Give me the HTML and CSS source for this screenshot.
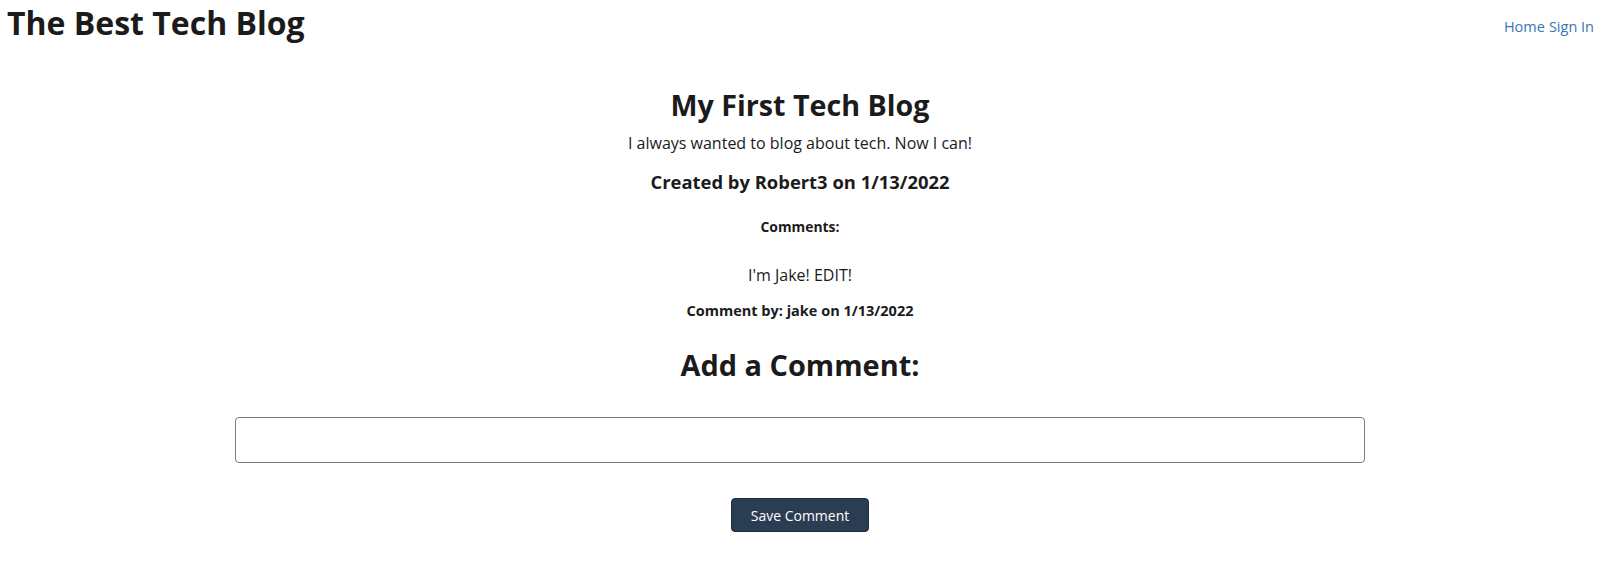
FILE: index.html
```html
<!DOCTYPE html>
<html lang="en">
<head>
<meta charset="utf-8">
<title>The Best Tech Blog</title>
<link rel="stylesheet" href="styles.css">
</head>
<body>
<header class="site-header">
  <h1 class="site-title">The Best Tech Blog</h1>
  <nav class="site-nav">
    <a href="#" class="nav-link">Home</a>
    <a href="#" class="nav-link">Sign In</a>
  </nav>
</header>
<main class="post">
  <h2 class="post-title">My First Tech Blog</h2>
  <p class="post-body">I always wanted to blog about tech. Now I can!</p>
  <h3 class="post-meta">Created by Robert3 on 1/13/2022</h3>
  <h5 class="comments-label">Comments:</h5>
  <div class="comment">
    <p class="comment-text">I'm Jake! EDIT!</p>
    <h4 class="comment-meta">Comment by: jake on 1/13/2022</h4>
  </div>
  <h2 class="add-title">Add a Comment:</h2>
  <form class="comment-form">
    <input class="comment-input" type="text">
    <button class="save-btn" type="button">Save Comment</button>
  </form>
</main>
</body>
</html>
```
FILE: styles.css
```css
* { box-sizing: border-box; }
body {
  margin: 0;
  font-family: "Open Sans", "Noto Sans", sans-serif;
  color: #1b1b1b;
  background: #fff;
}
.site-header {
  display: flex;
  justify-content: space-between;
  align-items: flex-start;
  padding: 0 6px 0 7px;
}
.site-title {
  margin: 0;
  font-size: 32px;
  line-height: 46px;
  font-weight: 700;
}
.site-nav {
  display: flex;
  gap: 4px;
  padding-top: 17px;
}
.nav-link {
  color: #3578b3;
  text-decoration: none;
  font-size: 14.5px;
  line-height: 20px;
}
.post {
  text-align: center;
  display: flex;
  flex-direction: column;
  align-items: center;
}
.post-title {
  margin: 39px 0 0;
  font-size: 28.7px;
  line-height: 40px;
  font-weight: 700;
}
.post-body {
  margin: 6px 0 0;
  font-size: 16px;
  line-height: 24px;
}
.post-meta {
  margin: 13px 0 0;
  font-size: 18.4px;
  line-height: 28px;
  font-weight: 700;
}
.comments-label {
  margin: 21px 0 0;
  font-size: 13.9px;
  line-height: 20px;
  font-weight: 700;
}
.comment-text {
  margin: 26px 0 0;
  font-size: 16px;
  line-height: 24px;
}
.comment-meta {
  margin: 14px 0 0;
  font-size: 14.5px;
  line-height: 20px;
  font-weight: 700;
}
.add-title {
  margin: 24px 0 0;
  font-size: 28.9px;
  line-height: 40px;
  font-weight: 700;
}
.comment-form {
  display: flex;
  flex-direction: column;
  align-items: center;
  margin-top: 32px;
}
.comment-input {
  width: 1130px;
  height: 46px;
  border: 1px solid #7a7a7a;
  border-radius: 4px;
  font: inherit;
  padding: 0 10px;
}
.save-btn {
  margin-top: 35px;
  width: 138px;
  height: 34px;
  background: #2b3d52;
  color: #fff;
  border: 1px solid #1f2d3d;
  border-radius: 4px;
  font-family: inherit;
  font-size: 14px;
}
```
